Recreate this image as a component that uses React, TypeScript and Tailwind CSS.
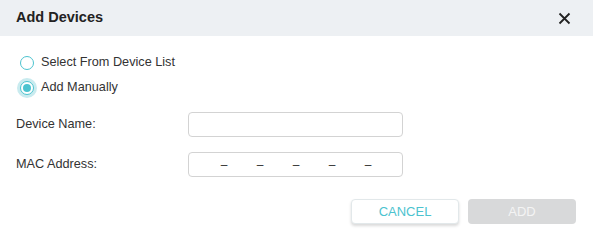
export default function App() {
  return (
    <div className="w-[593px] h-[238px] bg-white font-['Liberation_Sans',Arial,sans-serif] text-[#333]">
      {/* Header */}
      <div className="h-[36px] bg-[#edf0f3] flex items-center justify-between pl-[16px] pr-[22px]">
        <span className="text-[14.5px] font-bold text-[#222]">Add Devices</span>
        <svg width="13" height="13" viewBox="0 0 13 13" className="text-[#222]">
          <path d="M1.5 1.5 L11.5 11.5 M11.5 1.5 L1.5 11.5" stroke="currentColor" strokeWidth="1.8" fill="none" />
        </svg>
      </div>

      {/* Radios */}
      <div className="pl-[16px] pt-[17px] flex flex-col gap-[5px]">
        <label className="flex items-center h-[20px] gap-[3px]">
          <span className="w-[22px] h-[20px] flex items-center justify-center">
            <span className="w-[14px] h-[14px] rounded-full border border-[#4cc3cf] bg-white" />
          </span>
          <span className="text-[12.7px] text-[#333]">Select From Device List</span>
        </label>
        <label className="flex items-center h-[20px] gap-[3px]">
          <span className="w-[22px] h-[20px] flex items-center justify-center">
            <span className="w-[20px] h-[20px] rounded-full bg-[#c9ebef] flex items-center justify-center">
              <span className="w-[14px] h-[14px] rounded-full border border-[#4cc3cf] bg-white flex items-center justify-center">
                <span className="w-[8px] h-[8px] rounded-full bg-[#4cc3cf]" />
              </span>
            </span>
          </span>
          <span className="text-[12.7px] text-[#333]">Add Manually</span>
        </label>
      </div>

      {/* Fields */}
      <div className="pl-[16px] pt-[14px] flex flex-col gap-[15px]">
        <div className="flex items-center">
          <span className="w-[172px] text-[12.7px] text-[#333]">Device Name:</span>
          <div className="w-[215px] h-[25px] border border-[#d3d3d3] rounded-[4px]" />
        </div>
        <div className="flex items-center">
          <span className="w-[172px] text-[12.7px] text-[#333]">MAC Address:</span>
          <div className="w-[215px] h-[25px] border border-[#d3d3d3] rounded-[4px] flex items-center pl-[31px] gap-[28px] text-[12px] text-[#333]">
            <span className="w-[8px] text-center">–</span>
            <span className="w-[8px] text-center">–</span>
            <span className="w-[8px] text-center">–</span>
            <span className="w-[8px] text-center">–</span>
            <span className="w-[8px] text-center">–</span>
          </div>
        </div>
      </div>

      {/* Buttons */}
      <div className="flex justify-end gap-[9px] pr-[17px] pt-[22px]">
        <button className="w-[108px] h-[25px] rounded-[4px] bg-white border border-[#e2e8ea] shadow-[0_2px_3px_rgba(0,0,0,0.15)] text-[13px] text-[#4cc3cf]">
          CANCEL
        </button>
        <button className="w-[108px] h-[25px] rounded-[4px] bg-[#d8d9da] text-[13px] text-[#f4f4f4]">
          ADD
        </button>
      </div>
    </div>
  );
}
